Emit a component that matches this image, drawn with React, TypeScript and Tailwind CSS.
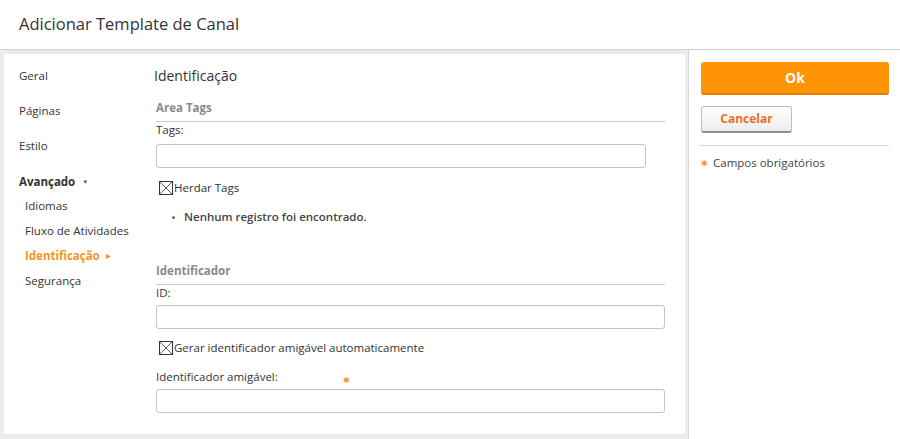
import React from "react";

const font = { fontFamily: '"Open Sans", "Noto Sans", sans-serif' };

function CheckBox() {
  return (
    <svg width="14" height="14" viewBox="0 0 14 14" className="shrink-0">
      <rect x="0.5" y="0.5" width="13" height="13" fill="#fff" stroke="#333" />
      <path d="M1 1 L13 13 M13 1 L1 13" stroke="#333" strokeWidth="0.8" />
    </svg>
  );
}

function Star({ className = "" }: { className?: string }) {
  return <span className={`text-[#f7941d] text-[8px] leading-none ${className}`}>✱</span>;
}

const navTop = [
  { label: "Geral", mt: "mt-[14px]" },
  { label: "Páginas", mt: "mt-[19px]" },
  { label: "Estilo", mt: "mt-[19px]" },
];

export default function App() {
  return (
    <div className="w-[900px] h-[439px] flex flex-col bg-white text-[#333] overflow-hidden" style={font}>
      {/* header */}
      <div className="h-[50px] shrink-0 border-b border-[#cfcfcf] flex items-center pl-[19px]">
        <h1 className="text-[16.5px] text-[#333]">Adicionar Template de Canal</h1>
      </div>

      <div className="flex flex-1 min-h-0">
        {/* left gray area */}
        <div className="w-[689px] shrink-0 bg-[#ebebeb] pl-[4px] pr-[3px] pt-[4px] pb-[5px] border-r border-[#d6d6d6]">
          <div className="bg-white h-full flex">
            {/* nav */}
            <nav className="w-[152px] shrink-0 pl-[15px] text-[11.5px] leading-[16px] text-[#333]">
              {navTop.map((n) => (
                <div key={n.label} className={n.mt}>{n.label}</div>
              ))}
              <div className="mt-[20px] font-bold flex items-center gap-[7px]">
                Avançado <span className="text-[6px] text-[#555]">▼</span>
              </div>
              <div className="pl-[6px]">
                <div className="mt-[8px]">Idiomas</div>
                <div className="mt-[9px]">Fluxo de Atividades</div>
                <div className="mt-[9px] font-bold text-[#f7941d] flex items-center gap-[6px]">
                  Identificação <span className="text-[6px]">▶</span>
                </div>
                <div className="mt-[9px]">Segurança</div>
              </div>
            </nav>

            {/* main */}
            <div className="w-[509px] shrink-0 pt-[12px] text-[11.5px] leading-[16px]">
              <h2 className="text-[14px] leading-[20px] text-[#333] -ml-[2px]">Identificação</h2>

              <div className="mt-[14px] h-[22px] border-b border-[#c8c8c8] font-bold text-[#8a8a8a]">Area Tags</div>
              <div>Tags:</div>
              <div className="mt-[6px] h-[24px] w-[490px] border border-[#c4c4c4] rounded-[3px] bg-white" />
              <label className="mt-[12px] flex items-center gap-[1px] pl-[3px]">
                <CheckBox />
                <span>Herdar Tags</span>
              </label>
              <ul className="mt-[13px] pl-[16px]">
                <li className="flex items-center gap-[9px] font-semibold text-[#444]">
                  <span className="w-[3px] h-[3px] rounded-full bg-[#666]" />
                  Nenhum registro foi encontrado.
                </li>
              </ul>

              <div className="mt-[38px] h-[22px] border-b border-[#c8c8c8] font-bold text-[#8a8a8a]">Identificador</div>
              <div>ID:</div>
              <div className="mt-[4px] h-[24px] w-full border border-[#c4c4c4] rounded-[3px] bg-white" />
              <label className="mt-[11px] flex items-center gap-[1px] pl-[3px]">
                <CheckBox />
                <span>Gerar identificador amigável automaticamente</span>
              </label>
              <div className="mt-[13px] flex items-start">
                <span>Identificador amigável:</span>
                <Star className="ml-[65px] mt-[7px]" />
              </div>
              <div className="mt-[4px] h-[24px] w-full border border-[#c4c4c4] rounded-[3px] bg-white" />
            </div>
          </div>
        </div>

        {/* right panel */}
        <div className="flex-1 bg-white pt-[12px] pl-[12px] pr-[11px]">
          <button className="w-[188px] h-[33px] rounded-[3px] bg-[#ff9505] border-b-2 border-[#e57c00] text-white font-bold text-[14px]">
            Ok
          </button>
          <div className="mt-[10px]">
            <button className="w-[91px] h-[27px] rounded-[3px] border border-[#bdbdbd] border-b-2 border-b-[#8f8f8f] bg-gradient-to-b from-white to-[#ececec] text-[#ec6f1e] font-bold text-[12px]">
              Cancelar
            </button>
          </div>
          <div className="mt-[12px] -ml-[2px] border-t border-[#d6d6d6]" />
          <div className="mt-[9px] flex items-center gap-[5px] text-[11.5px] leading-[16px] text-[#444]">
            <Star />
            <span>Campos obrigatórios</span>
          </div>
        </div>
      </div>
    </div>
  );
}
